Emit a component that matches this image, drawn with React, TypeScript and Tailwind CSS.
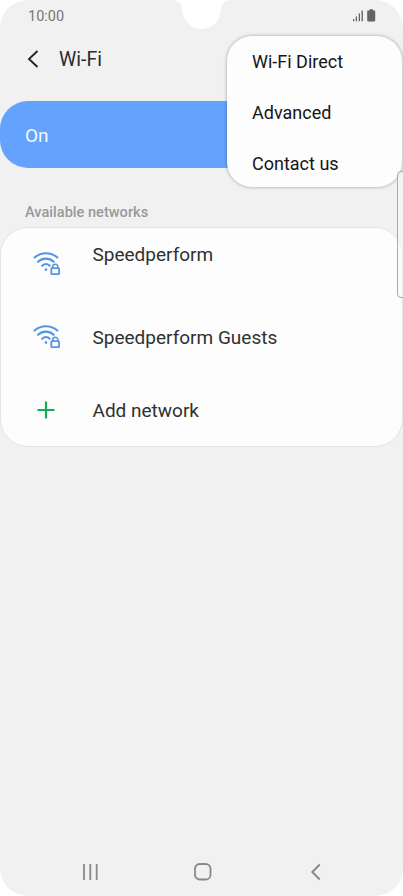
const MENU_ITEMS = ["Wi-Fi Direct", "Advanced", "Contact us"];

function Notch() {
  return (
    <svg className="absolute left-[171px] top-0" width="62" height="30" viewBox="0 0 62 30" fill="#fff">
      <path d="M1 0C7 .5 10.800 3.500 11 9.500C11.300 20.500 20 29 30.500 29S49.700 20.500 50 9.500C50.200 3.500 54 .5 60 0Z" />
    </svg>
  );
}

function StatusBar() {
  return (
    <div className="flex h-8 items-center justify-between pl-7 pr-[26px] text-[14.500px] text-[#777]">
      <span className="pt-px">10:00</span>
      <svg width="26" height="14" viewBox="0 0 26 14" fill="#646464">
        <path d="M2 10h1.200v2.200H2zM4.700 7.500h1.300v4.700H4.700zM7.700 4.500H9v7.700H7.700zM10.500 1.500h1.400v10.700h-1.400z" />
        <path d="M18.500 .3h3.500v1.200h1.700q.5 0 .5.500v9.600q0 .8-.8.800h-6.400q-.8 0-.8-.8V2q0-.5.500-.5h1.800z" />
      </svg>
    </div>
  );
}

function Menu() {
  return (
    <div className="absolute left-[227px] top-9 flex h-[151px] w-[175px] flex-col rounded-[25px] bg-[#fdfdfd] pl-[25px] text-[18px] text-[#151515] shadow-[0_0_3px_1px_rgba(0,0,0,0.2)]">
      {MENU_ITEMS.map((item) => (
        <div key={item} className="flex h-[51px] shrink-0 items-center">
          {item}
        </div>
      ))}
    </div>
  );
}

function WifiLock() {
  return (
    <svg width="30" height="28" viewBox="0 0 30 28" fill="none" stroke="#5495e3" strokeWidth="2.100" strokeLinecap="round">
      <path d="M2.500 6.500C9.200 .8 18.700 .8 25.400 6.500M6 10.800C10.700 6.600 17.200 6.600 21.700 10.800M10.200 14.800C12.500 12.600 15.400 12.600 17.700 14.800" />
      <circle cx="14" cy="18.600" r="1.300" fill="#5495e3" stroke="none" />
      <path d="M20.700 17v-1.200a2.600 2.600 0 0 1 5.200 0V17" strokeWidth="1.600" />
      <rect x="19.300" y="17.200" width="7.800" height="6" rx=".8" strokeWidth="1.800" />
    </svg>
  );
}

function Plus() {
  return (
    <svg width="30" height="28" viewBox="0 0 30 28" stroke="#13ad58" strokeWidth="2.200">
      <path d="M5.500 13h17M14 4.500v17" />
    </svg>
  );
}

export default function App() {
  return (
    <div className="h-[896px] w-[403px] overflow-hidden bg-white font-['Roboto',sans-serif]">
      <div className="relative flex h-full flex-col overflow-hidden rounded-[28px] bg-[#f1f1f1]">
        <StatusBar />
        <header className="flex h-[69px] items-start gap-[19px] pl-[27px] pt-[13px] text-[19.500px] text-[#2b2b2b]">
          <svg className="mt-[5px]" width="13" height="18" viewBox="0 0 13 18" fill="none" stroke="#252525" strokeWidth="1.900">
            <path d="M10.500 1L2 9l8.500 8" />
          </svg>
          <h1 className="pt-px leading-7">Wi-Fi</h1>
        </header>
        <div className="mr-5 flex h-[67px] items-center rounded-[28px] bg-[#64a3fd] pl-[25px] pt-[3px] text-[19px] text-[#f4f8ff]">On</div>
        <h2 className="h-[59px] pl-[25px] pt-[34px] text-[14.600px] font-medium leading-[20px] text-[#999]">Available networks</h2>
        <section className="h-[220px] rounded-[28px] border border-[#e3e3e3] bg-[#fdfdfd] pl-[31px] text-[19px] text-[#303030]">
          <div className="flex h-[73px] items-start pt-[14px]">
            <div className="mt-[9px] w-[60.500px]"><WifiLock /></div>
            <span className="leading-[26px]">Speedperform</span>
          </div>
          <div className="flex h-[73px] items-center">
            <div className="w-[60.500px]"><WifiLock /></div>
            <span className="pt-[2px]">Speedperform Guests</span>
          </div>
          <div className="flex h-[73px] items-center">
            <div className="w-[60.500px]"><Plus /></div>
            <span className="pt-[2px]">Add network</span>
          </div>
        </section>
        <nav className="mt-auto flex h-12 items-center pl-[82px]">
          <svg width="17" height="18" viewBox="0 0 17 18" stroke="#898989" strokeWidth="1.800"><path d="M2 1v16M8.300 1v16M14.700 1v16" /></svg>
          <svg className="ml-[95px]" width="18" height="18" viewBox="0 0 18 18" fill="none" stroke="#898989" strokeWidth="1.800"><rect x="1" y="1" width="15.500" height="15.500" rx="4.800" /></svg>
          <svg className="ml-[98px]" width="12" height="18" viewBox="0 0 12 18" fill="none" stroke="#898989" strokeWidth="1.900"><path d="M9.800 1.500L2.300 9l7.500 7.500" /></svg>
        </nav>
        <Notch />
        <Menu />
        <div className="absolute -right-1 top-[171px] h-[127px] w-[10px] rounded-[4px] border border-[#aaa] bg-[#f8f8f8]/60" />
      </div>
    </div>
  );
}
